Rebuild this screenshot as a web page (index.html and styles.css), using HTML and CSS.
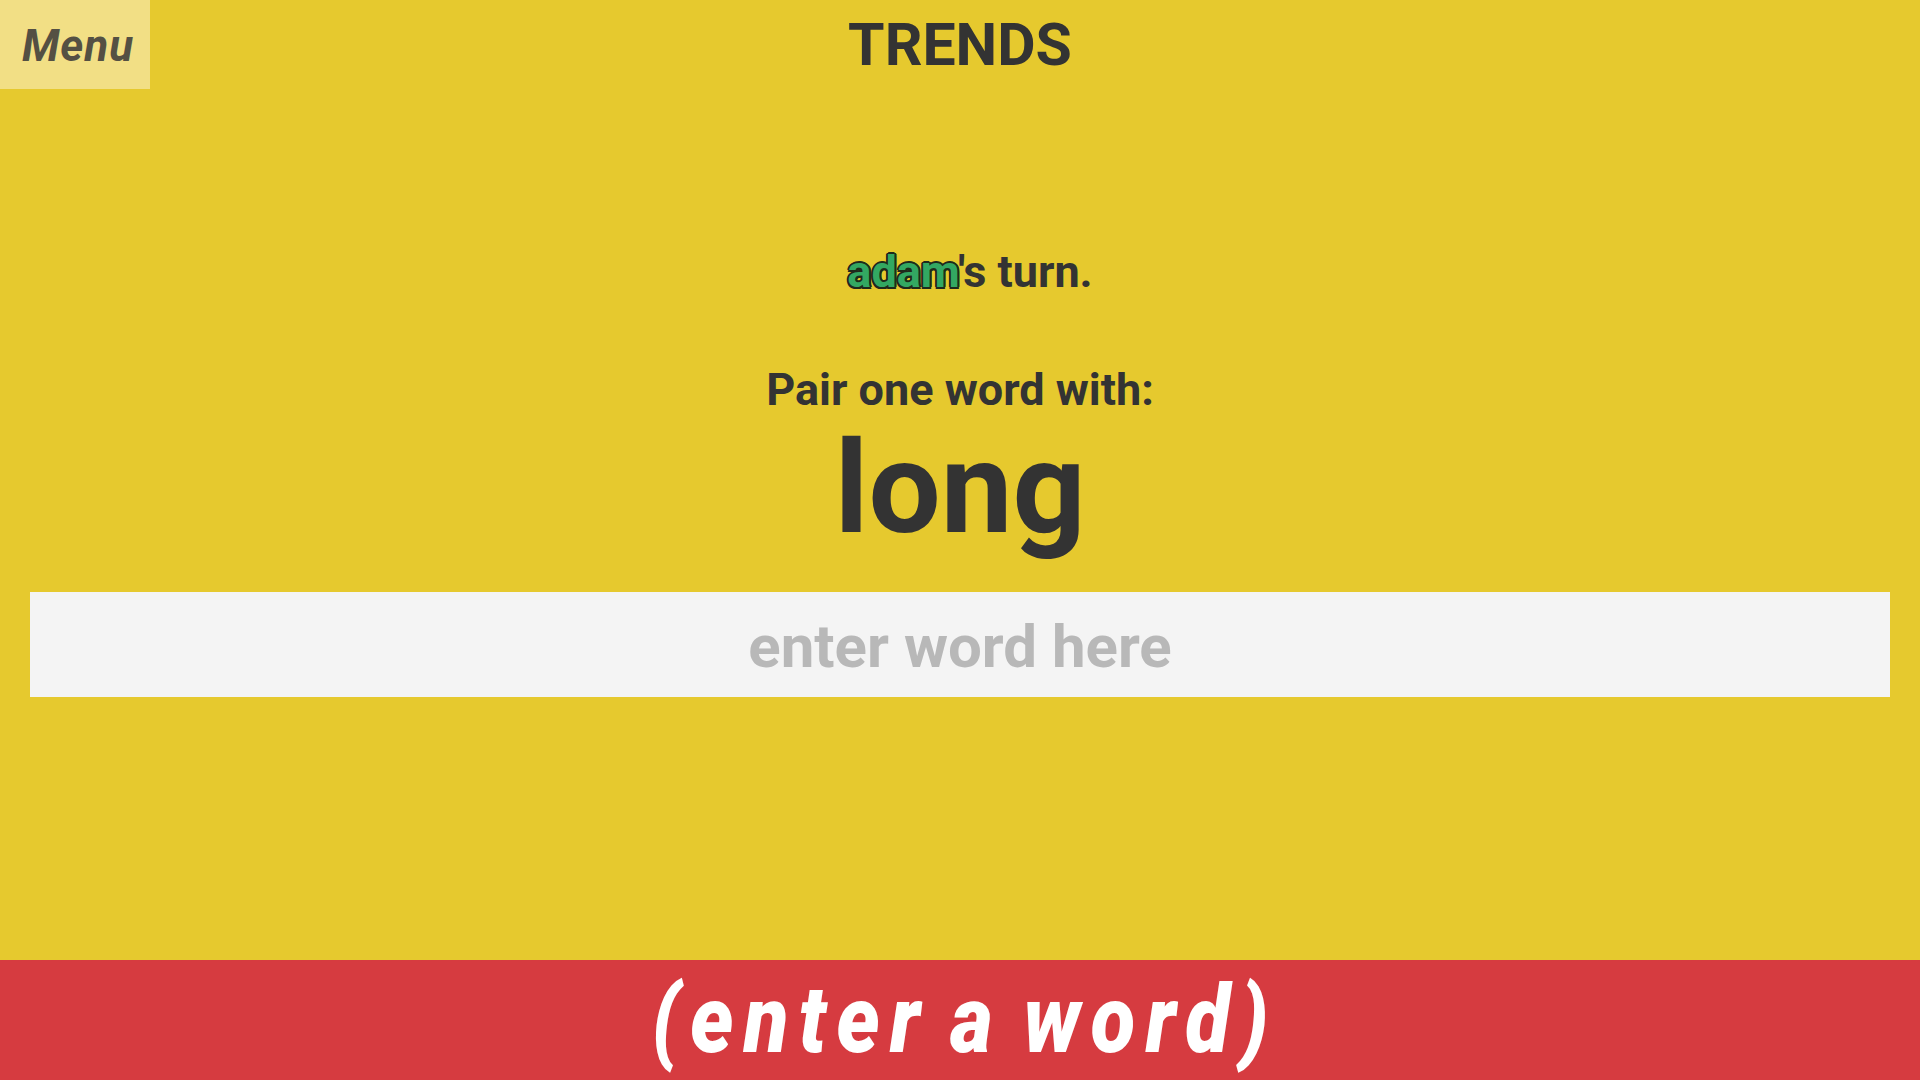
FILE: index.html
```html
<!DOCTYPE html>
<html lang="en">
<head>
<meta charset="utf-8">
<title>Trends</title>
<link rel="stylesheet" href="styles.css">
</head>
<body>
<div class="app">
  <header class="topbar">
    <button class="menu-btn">Menu</button>
    <h1 class="title">TRENDS</h1>
    <div class="spacer"></div>
  </header>
  <main class="game">
    <p class="turn"><span class="player">adam</span>'s turn.</p>
    <p class="prompt">Pair one word with:</p>
    <p class="word">long</p>
    <input class="word-input" type="text" placeholder="enter word here">
  </main>
  <footer class="submit-bar">
    <span class="submit-text">(enter a word)</span>
  </footer>
</div>
</body>
</html>
```

FILE: styles.css
```css
* { box-sizing: border-box; }

html, body {
  margin: 0;
  padding: 0;
  height: 100%;
}

body {
  background: #e6c92e;
  font-family: Roboto, "Liberation Sans", sans-serif;
  color: #333333;
}

.app {
  display: flex;
  flex-direction: column;
  height: 100vh;
}

.topbar {
  display: grid;
  grid-template-columns: 150px 1fr 150px;
  height: 89px;
}

.menu-btn {
  border: none;
  margin: 0;
  background: #f2df85;
  color: #545043;
  font-family: Roboto, "Liberation Sans", sans-serif;
  font-style: italic;
  font-weight: 700;
  font-size: 44px;
  letter-spacing: 1px;
  line-height: 89px;
  padding: 2px 0 0 6px;
  height: 89px;
  text-align: center;
}

.title {
  margin: 0;
  text-align: center;
  font-size: 59px;
  font-weight: 700;
  line-height: 89px;
  color: #333333;
}

.game {
  flex: 1;
  display: flex;
  flex-direction: column;
  align-items: center;
}

.game p { margin: 0; text-align: center; }

.turn {
  margin-top: 153px !important;
  font-size: 45px;
  font-weight: 700;
  line-height: 60px;
  padding-left: 20px;
}

.player {
  color: #33a862;
  text-shadow:
    2px 0 0 #1f2a1c, -2px 0 0 #1f2a1c, 0 2px 0 #1f2a1c, 0 -2px 0 #1f2a1c,
    1.5px 1.5px 0 #1f2a1c, -1.5px 1.5px 0 #1f2a1c, 1.5px -1.5px 0 #1f2a1c, -1.5px -1.5px 0 #1f2a1c;
}

.prompt {
  margin-top: 60px !important;
  font-size: 45px;
  font-weight: 700;
  line-height: 56px;
}

.word {
  margin-top: 6px !important;
  font-size: 128px;
  font-weight: 700;
  line-height: 128px;
}

.word-input {
  margin-top: 40px;
  align-self: stretch;
  margin-left: 30px;
  margin-right: 30px;
  height: 105px;
  border: none;
  outline: none;
  background: #f4f4f4;
  font-family: Roboto, "Liberation Sans", sans-serif;
  font-weight: 700;
  font-size: 60px;
  text-align: center;
  color: #333333;
  padding: 3px 0 0 0;
}

.word-input::placeholder {
  color: #b8b8b8;
  opacity: 1;
}

.submit-bar {
  height: 120px;
  background: #d63b40;
  display: flex;
  justify-content: center;
  align-items: center;
  overflow: hidden;
}

.submit-text {
  display: inline-block;
  color: #ffffff;
  font-family: Roboto, "Liberation Sans", sans-serif;
  font-style: italic;
  font-weight: 900;
  font-size: 95px;
  line-height: 120px;
  letter-spacing: 12px;
  word-spacing: -12px;
  transform: scaleX(0.86);
  margin-left: 10px;
}
```
